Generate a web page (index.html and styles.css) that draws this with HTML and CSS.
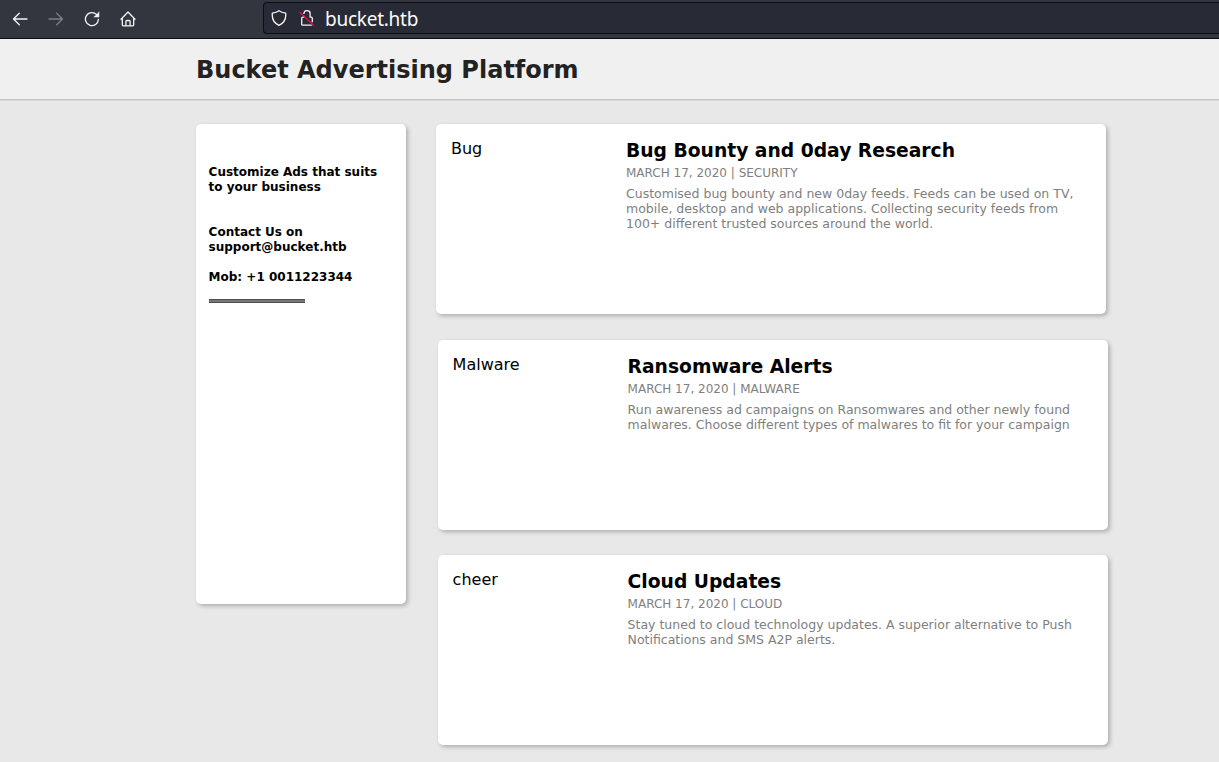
FILE: index.html
```html
<!DOCTYPE html>
<html lang="en">
<head>
<meta charset="utf-8">
<title>Bucket Advertising Platform</title>
<link rel="stylesheet" href="styles.css">
</head>
<body>
<div class="toolbar">
  <div class="nav">
    <svg class="icon" viewBox="0 0 16 16"><path d="M15 8H1.500M7.300 2.300 1.500 8l5.800 5.700"/></svg>
    <svg class="icon icon-off" viewBox="0 0 16 16"><path d="M1 8h13.500M8.700 2.300 14.500 8l-5.800 5.700"/></svg>
    <svg class="icon" viewBox="0 0 16 16"><path d="M14.400 8.500a6.500 6.500 0 1 1-2-5.100"/><path class="solid" d="M15 1.200v4.800h-4.800z"/></svg>
    <svg class="icon home" viewBox="0 0 16 16"><path d="M1 8.200 8 1l7 7.200M2.300 7v6.800q0 1 1 1h9.400q1 0 1-1V7M5.900 14.500v-4q0-1 1-1h2.200q1 0 1 1v4"/></svg>
  </div>
  <div class="urlbar">
    <svg class="icon" viewBox="0 0 16 16"><path d="M8 .7C6 2.200 3.500 2.800 1.300 3.200c-.5 5.300 1.500 9.800 6.700 12.100 5.200-2.300 7.200-6.800 6.700-12.100C12.500 2.800 10 2.200 8 .7z"/></svg>
    <svg class="icon lock" viewBox="0 0 16 16"><path d="M4.900 3.400A3.100 3.100 0 0 1 11.100 4v3.200h1.200q1 0 1 1M4.900 7.200H3.700q-1 0-1 1v6q0 1 1 1h8.600M4.900 7.200V6.500M13.300 8.200v3.500"/><path class="slash" d="m1 2.500 13.500 12.800"/></svg>
    <span class="url">bucket.htb</span>
  </div>
</div>
<header class="header"><h1 class="brand">Bucket Advertising Platform</h1></header>
<main class="main">
  <aside class="side card">
    <p class="note">Customize Ads that suits<br>to your business</p>
    <p class="note contact">Contact Us on<br>support@bucket.htb</p>
    <p class="note">Mob: +1 0011223344</p>
    <div class="rule"></div>
  </aside>
  <div class="feed">
    <article class="post card first">
      <div class="thumb">Bug</div>
      <div class="copy">
        <h2 class="heading">Bug Bounty and 0day Research</h2>
        <p class="meta">MARCH 17, 2020 | SECURITY</p>
        <p class="text">Customised bug bounty and new 0day feeds. Feeds can be used on TV,<br>mobile, desktop and web applications. Collecting security feeds from<br>100+ different trusted sources around the world.</p>
      </div>
    </article>
    <article class="post card">
      <div class="thumb">Malware</div>
      <div class="copy">
        <h2 class="heading">Ransomware Alerts</h2>
        <p class="meta">MARCH 17, 2020 | MALWARE</p>
        <p class="text">Run awareness ad campaigns on Ransomwares and other newly found<br>malwares. Choose different types of malwares to fit for your campaign</p>
      </div>
    </article>
    <article class="post card last">
      <div class="thumb">cheer</div>
      <div class="copy">
        <h2 class="heading">Cloud Updates</h2>
        <p class="meta">MARCH 17, 2020 | CLOUD</p>
        <p class="text">Stay tuned to cloud technology updates. A superior alternative to Push<br>Notifications and SMS A2P alerts.</p>
      </div>
    </article>
  </div>
</main>
</body>
</html>
```
FILE: styles.css
```css
* { box-sizing: border-box; }
body { margin: 0; height: 762px; overflow: hidden; background: #e8e8e8; font-family: "DejaVu Sans", sans-serif; color: #000; }
h1, h2, p { margin: 0; }
.toolbar { height: 39px; display: flex; align-items: flex-start; background: #33363f; border-bottom: 1px solid #0c0c11; }
.nav { width: 263px; height: 38px; display: flex; align-items: center; gap: 20px; padding-left: 12px; }
.icon { width: 16px; height: 16px; flex: none; fill: none; stroke: #f4f4f4; stroke-width: 1.3; stroke-linecap: round; stroke-linejoin: round; }
.icon-off { stroke: #7d7f85; }
.home { margin-left: -0.500px; }
.solid { fill: #f4f4f4; stroke-width: 0.5; }
.slash { stroke: #e2124b; stroke-width: 1.4; }
.urlbar { flex: 1; height: 32px; margin-top: 2px; display: flex; align-items: center; padding-left: 7px; background: #282a35; border: 1px solid #0d0e13; border-right: 0; border-radius: 4px 0 0 4px; }
.lock { margin-left: 12px; }
.url { margin-left: 10px; padding-top: 1px; font: 19px/30px "Noto Sans", sans-serif; letter-spacing: -0.25px; color: #fbfbfb; }
.header { height: 61px; padding: 16px 0 0 196px; background: #f0f0f0; border-bottom: 1px solid #c6c6c6; box-shadow: 0 1px 0 #d8d8d8; }
.brand { font-size: 24px; line-height: 30px; color: #222; }
.main { display: flex; align-items: flex-start; gap: 30px; padding: 24px 0 0 196px; }
.card { background: #fff; border-radius: 5px; box-shadow: 2px 2px 4px rgba(0, 0, 0, 0.25); }
.side { width: 210px; height: 480px; padding: 41px 0 0 12.600px; }
.note { font-size: 12px; line-height: 15px; font-weight: bold; }
.contact { margin: 30px 0 15px; }
.rule { width: 96px; height: 4px; margin-top: 14px; background: #777; border: solid #4d4d4d; border-width: 1px 0; }
.post { width: 670px; height: 190px; margin: 0 0 25px 2px; padding: 15px 15px 15px 14.600px; display: flex; }
.first { margin: 0 0 26px; padding-left: 15px; }
.last { margin-bottom: 0; }
.thumb { width: 175px; font-size: 16px; line-height: 19px; }
.copy { padding-top: 1px; white-space: nowrap; }
.heading { font-size: 18.720px; line-height: 22px; }
.meta { margin-top: 4px; font-size: 12px; line-height: 15px; color: #808080; }
.text { margin-top: 5px; font-size: 12.500px; line-height: 15px; color: #808080; }
```
